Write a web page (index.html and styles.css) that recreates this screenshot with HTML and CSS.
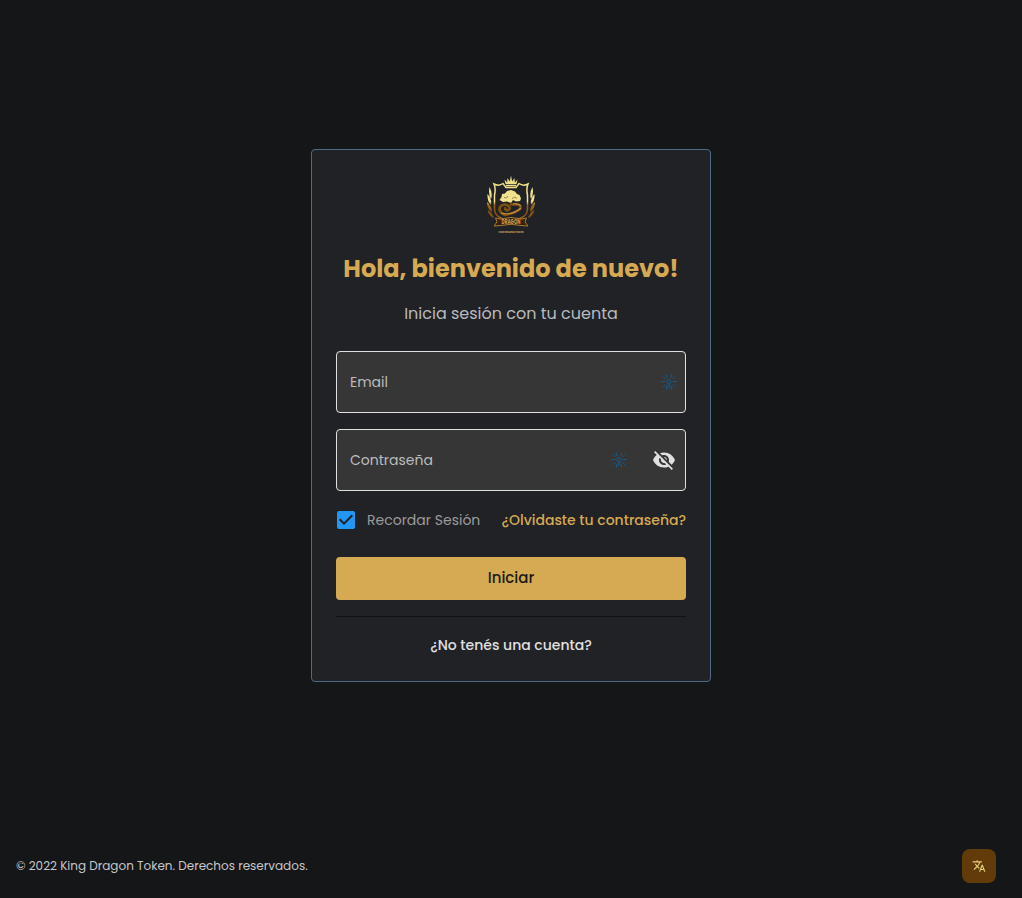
FILE: index.html
```html
<!DOCTYPE html>
<html lang="es">
<head>
<meta charset="utf-8">
<title>King Dragon Token</title>
<link rel="stylesheet" href="styles.css">
</head>
<body>
<svg class="defs" width="0" height="0" aria-hidden="true">
  <symbol id="burst" viewBox="0 0 16 16">
    <g fill="none" stroke="currentColor" stroke-width="1">
      <circle cx="8" cy="7.5" r="2"/>
      <path d="M7.2 9.500V14M8.800 9.500V14M5.500 .5V3L6.500 4M10.500 .5V3L9.500 4M2 2.500 4.500 5M14 2.500 11.500 5M0 7.500H4.500M11.500 7.500H16M2 13 4.500 10.500M14 13 11.500 10.500M5.500 15.500V12.500M10.500 15.500V12.500"/>
    </g>
  </symbol>
</svg>
<main class="page">
  <section class="card">
    <svg class="logo" viewBox="0 0 50 60" role="img" aria-label="King Dragon Token">
      <defs>
        <linearGradient id="gold" x1="0" y1="0" x2="0" y2="60" gradientUnits="userSpaceOnUse">
          <stop offset="0" stop-color="#eadb82"/>
          <stop offset=".44" stop-color="#f4e394"/>
          <stop offset=".5" stop-color="#9a6420"/>
          <stop offset=".68" stop-color="#81500f"/>
          <stop offset=".78" stop-color="#cfa052"/>
          <stop offset="1" stop-color="#a37b35"/>
        </linearGradient>
      </defs>
      <g fill="url(#gold)">
        <path d="M18.500 4.500 21.200 7.500 21.500 3 23.800 6.500 25 .5 26.200 6.500 28.500 3 28.800 7.500 31.500 4.500 30.500 9H19.500ZM20 9.800H30V11.200H20Z"/>
        <path d="M3.500 12Q7 18 5 24Q2 19 3.500 12ZM1.500 19Q6 24 5 30Q1 26 1.500 19ZM1 27Q6 31 6 37Q1 34 1 27ZM1.500 35Q6 37 8 43Q3 41 1.500 35ZM46.500 12Q43 18 45 24Q48 19 46.500 12ZM48.500 19Q44 24 45 30Q49 26 48.500 19ZM49 27Q44 31 44 37Q49 34 49 27ZM48.500 35Q44 37 42 43Q47 41 48.500 35Z"/>
        <path d="M13.500 25 15.500 22 16 19 19 18.500 21 16 25 15 29 16.500 31 19 33.500 20 35 23.500 34 26 30 26.500 27 25 25 28 21 26.500 17 27Z"/>
      </g>
      <path d="M8 9Q13 11.500 17 8.500L20 12.500H30L33 8.500Q37 11.500 42 9Q40 14 41.500 20V34Q41.500 40 35 43L25 48 15 43Q8.500 40 8.500 34V20Q10 14 8 9Z" fill="none" stroke="url(#gold)" stroke-width="1.5"/>
      <path d="M24 29.500H31Q37 31 33 35Q27 39 19 40Q12 37 14 32Q17 28 22 30.500Q26 34 21 35.500Q18 34 20 32.500" fill="none" stroke="#80500f" stroke-width="2.600"/>
      <path d="M15 38Q25 41 35 33M27 29Q33 28 35 31" fill="none" stroke="#c98f43" stroke-width="1.100"/>
      <path d="M18 22.500 20.500 23 22 21M26 23.500 29 22 31 23.500" fill="none" stroke="#806d39" stroke-width=".8"/>
      <path d="M9.500 43 14 44Q25 41 36 44L40.500 43 39 47 42 51 35 50.500Q25 48 15 50.500L8 51 11 47Z" fill="#35220c" stroke="#a97930" stroke-width="1"/>
      <text x="25" y="49" class="logo-name" textLength="19" lengthAdjust="spacingAndGlyphs">DRAGON</text>
      <text x="25" y="57.500" class="logo-sub" textLength="25" lengthAdjust="spacingAndGlyphs">KING DRAGON TOKEN</text>
    </svg>
    <h1 class="title">Hola, bienvenido de nuevo!</h1>
    <p class="subtitle">Inicia sesión con tu cuenta</p>
    <div class="field field-email">
      <span>Email</span>
      <svg class="burst"><use href="#burst"/></svg>
    </div>
    <div class="field field-password">
      <span>Contraseña</span>
      <svg class="burst"><use href="#burst"/></svg>
      <svg class="eye" viewBox="0 0 24 24"><path d="M12 7c2.76 0 5 2.24 5 5 0 .65-.13 1.26-.36 1.83l2.92 2.92c1.51-1.26 2.7-2.89 3.43-4.75-1.73-4.39-6-7.5-11-7.5-1.4 0-2.74.25-3.98.7l2.16 2.16C10.74 7.13 11.35 7 12 7zM2 4.27l2.28 2.28.46.46C3.08 8.3 1.78 10.02 1 12c1.73 4.39 6 7.5 11 7.5 1.55 0 3.03-.3 4.38-.84l.42.42L19.73 22 21 20.73 3.27 3 2 4.27zM7.53 9.8l1.55 1.55c-.05.21-.08.43-.08.65 0 1.66 1.34 3 3 3 .22 0 .44-.03.65-.08l1.55 1.55c-.67.33-1.41.53-2.2.53-2.76 0-5-2.24-5-5 0-.79.2-1.53.53-2.2zm4.31-.78 3.15 3.15.02-.16c0-1.66-1.34-3-3-3l-.17.01z"/></svg>
    </div>
    <div class="options">
      <svg class="check" viewBox="3 3 18 18"><path d="M19 3H5c-1.11 0-2 .9-2 2v14c0 1.1.89 2 2 2h14c1.11 0 2-.9 2-2V5c0-1.1-.89-2-2-2zm-9 14-5-5 1.41-1.41L10 14.17l7.59-7.59L19 8l-9 9z"/></svg>
      <span class="remember">Recordar Sesión</span>
      <a class="forgot">¿Olvidaste tu contraseña?</a>
    </div>
    <button class="submit" type="button">Iniciar</button>
    <div class="divider"></div>
    <a class="register">¿No tenés una cuenta?</a>
  </section>
</main>
<footer class="footer">
  <span class="copyright">© 2022 King Dragon Token. Derechos reservados.</span>
  <button class="language" type="button" aria-label="Idioma">
    <svg viewBox="0 0 24 24"><path d="m12.87 15.07-2.54-2.51.03-.03c1.74-1.94 2.98-4.17 3.71-6.53H17V4h-7V2H8v2H1v1.99h11.17C11.5 7.92 10.44 9.75 9 11.35 8.07 10.32 7.3 9.19 6.69 8h-2c.73 1.63 1.73 3.17 2.98 4.56l-5.09 5.02L4 19l5-5 3.11 3.11.76-2.04zM18.5 10h-2L12 22h2l1.12-3h4.75L21 22h2l-4.5-12zm-2.62 7 1.62-4.33L19.12 17h-3.24z"/></svg>
  </button>
</footer>
</body>
</html>
```
FILE: styles.css
```css
* { box-sizing: border-box; }
body {
  margin: 0;
  height: 898px;
  display: flex;
  flex-direction: column;
  background: #141618;
  color: #e0e0e0;
  font-family: Poppins, Inter, sans-serif;
  font-size: 14px;
  white-space: nowrap;
  overflow: hidden;
}
.defs { display: none; }
.page {
  flex: 1;
  display: flex;
  justify-content: center;
  align-items: flex-start;
  padding-top: 149px;
}
.card {
  width: 400px;
  height: 533px;
  padding: 25px 24px 24px;
  display: flex;
  flex-direction: column;
  background: #212226;
  border: 1px solid #4f6a87;
  border-radius: 4px;
}
.logo { width: 50px; height: 60px; align-self: center; flex: none; overflow: visible; }
.logo-name, .logo-sub { text-anchor: middle; font-weight: 700; fill: #c99a50; }
.logo-name { font-size: 6.5px; }
.logo-sub { font-size: 3.4px; }
.title {
  margin: 16px 0 0;
  line-height: 36px;
  font-size: 24px;
  font-weight: 700;
  color: #d6aa52;
  text-align: center;
}
.subtitle {
  margin: 15px 0 0;
  line-height: 24px;
  font-size: 16px;
  color: #b8babd;
  text-align: center;
}
.field {
  height: 62px;
  flex: none;
  display: flex;
  align-items: center;
  padding: 0 9px 0 13px;
  background: #363636;
  border: 1px solid #e0e0e0;
  border-radius: 4px;
  color: #bcbcbc;
}
.field-email { margin-top: 25px; padding-right: 8px; }
.field-password { margin-top: 16px; }
.burst { width: 16px; height: 16px; margin-left: auto; color: #175887; }
.eye { width: 24px; height: 24px; margin-left: 25px; fill: #e0e0e0; }
.options {
  height: 20px;
  margin-top: 19px;
  padding-left: 1px;
  display: flex;
  align-items: center;
}
.check { width: 18px; height: 18px; fill: #2196f3; }
.remember { margin-left: 12px; color: #9b9b9c; }
.forgot { margin-left: auto; color: #d6aa52; font-weight: 500; }
.submit {
  height: 43px;
  flex: none;
  margin-top: 27px;
  padding: 0 0 2px;
  border: 0;
  border-radius: 4px;
  background: #d6aa52;
  color: #1b1a16;
  font: 500 15px Poppins, Inter, sans-serif;
}
.divider { height: 1px; margin-top: 16px; background: #111214; flex: none; }
.register {
  margin-top: 17px;
  line-height: 22px;
  text-align: center;
  font-weight: 500;
}
.footer {
  height: 64px;
  padding: 0 26px 0 16px;
  display: flex;
  justify-content: space-between;
  align-items: center;
}
.copyright { font-size: 12px; color: #c6c7c8; }
.language {
  width: 34px;
  height: 34px;
  padding: 0;
  display: flex;
  align-items: center;
  justify-content: center;
  border: 0;
  border-radius: 8px;
  background: #613b0a;
}
.language svg { width: 14px; height: 14px; fill: #e6d078; }
```
